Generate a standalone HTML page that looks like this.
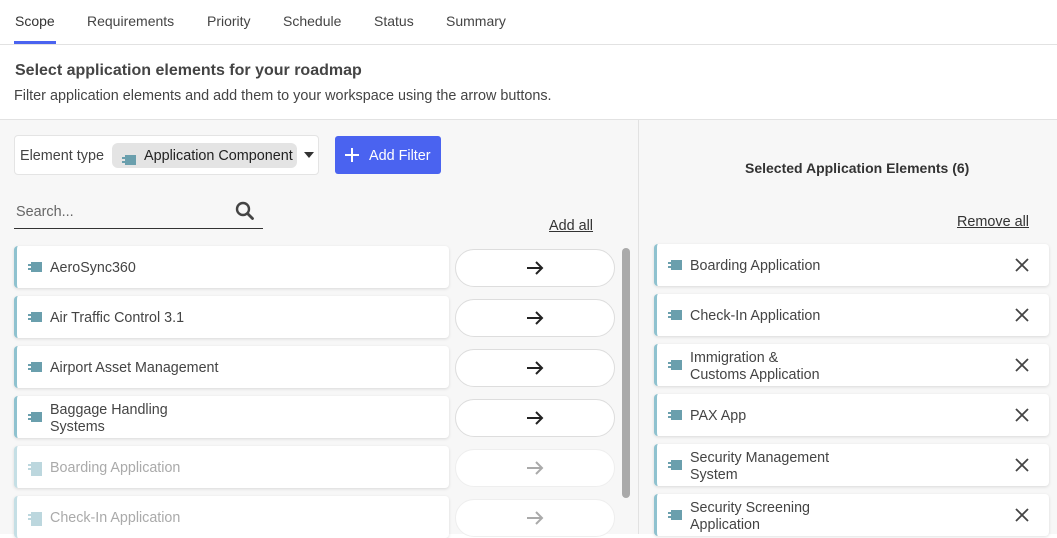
<!DOCTYPE html>
<html><head><style>
*{box-sizing:border-box;margin:0;padding:0}
body{width:1057px;height:534px;overflow:hidden;background:#fff;font-family:"Liberation Sans",sans-serif;color:#333;position:relative}
.abs{position:absolute}
.tab{position:absolute;top:13px;font-size:14px;color:#444}
.item{position:absolute;background:#fff;border-radius:4px;border-left:3px solid #8fc2cf;box-shadow:0 1px 3px rgba(0,0,0,.12);height:42px;display:flex;align-items:center;font-size:14.3px;line-height:17px;color:#444;padding-left:11px;padding-top:3px}
.item.dis{color:#aaa;border-left-color:#c5dfe5}
.ic{display:inline-block;width:14px;height:10px;margin-right:8px;position:relative;top:-2px;flex:none}
.ic:before{content:"";position:absolute;left:3px;top:0;width:11px;height:10px;background:#6a9fad}
.ic:after{content:"";position:absolute;left:0;top:2px;width:4px;height:2px;background:#6a9fad;box-shadow:0 4px 0 #6a9fad}
.dis .ic:before,.dis .ic:after{background:#bcd7de;box-shadow:0 4px 0 #bcd7de}
.btn{position:absolute;left:455px;width:160px;height:38px;border:1px solid #ddd;border-radius:19px;background:#fff;display:flex;align-items:center;justify-content:center}
.x{position:absolute;right:20px;top:14px}
</style></head><body>
<div class="tab" style="left:15px;color:#333">Scope</div>
<div class="tab" style="left:87px">Requirements</div>
<div class="tab" style="left:207px">Priority</div>
<div class="tab" style="left:283px">Schedule</div>
<div class="tab" style="left:374px">Status</div>
<div class="tab" style="left:446px">Summary</div>
<div class="abs" style="left:14px;top:41px;width:42px;height:3px;background:#4a63f0"></div>
<div class="abs" style="left:0;top:44px;width:1057px;height:1px;background:#e2e2e2"></div>
<div class="abs" style="left:15px;top:62px;font-size:16px;font-weight:bold;color:#444">Select application elements for your roadmap</div>
<div class="abs" style="left:14px;top:88px;font-size:14.4px;color:#444">Filter application elements and add them to your workspace using the arrow buttons.</div>
<div class="abs" style="left:0;top:119px;width:1057px;height:415px;background:#f7f7f7;border-top:1px solid #e2e2e2"></div>
<div class="abs" style="left:638px;top:120px;width:1px;height:414px;background:#e2e2e2"></div>

<div class="abs" style="left:14px;top:135px;width:305px;height:40px;background:#fff;border:1px solid #e4e4e4;border-radius:4px"></div>
<div class="abs" style="left:20px;top:148px;font-size:14.4px;color:#444">Element type</div>
<div class="abs" style="left:112px;top:143px;width:185px;height:25px;background:#e4e4e4;border-radius:6px"></div>
<div class="abs" style="left:122px;top:152px"><span class="ic" style="top:0"></span></div>
<div class="abs" style="left:144px;top:148px;font-size:14.4px;color:#222">Application Component</div>
<div class="abs" style="left:304px;top:152px;width:0;height:0;border-left:5px solid transparent;border-right:5px solid transparent;border-top:6px solid #333"></div>
<div class="abs" style="left:335px;top:136px;width:106px;height:38px;background:#4a63f0;border-radius:3px"></div>
<svg class="abs" style="left:344px;top:147px" width="16" height="16"><path d="M8 1v14M1 8h14" stroke="#fff" stroke-width="2"/></svg>
<div class="abs" style="left:369px;top:148px;font-size:14.4px;color:#fff">Add Filter</div>

<div class="abs" style="left:16px;top:204px;font-size:14.4px;color:#666">Search...</div>
<svg class="abs" style="left:235px;top:201px" width="20" height="20"><circle cx="8" cy="8" r="6" fill="none" stroke="#444" stroke-width="2.4"/><path d="M12.5 12.5l5 5" stroke="#444" stroke-width="2.8" stroke-linecap="round"/></svg>
<div class="abs" style="left:14px;top:228px;width:249px;height:1px;background:#333"></div>
<div class="abs" style="left:549px;top:218px;font-size:14.4px;color:#333;text-decoration:underline">Add all</div>

<div class="item" style="left:14px;top:246px;width:435px"><span class="ic"></span>AeroSync360</div>
<div class="item" style="left:14px;top:296px;width:435px"><span class="ic"></span>Air Traffic Control 3.1</div>
<div class="item" style="left:14px;top:346px;width:435px"><span class="ic"></span>Airport Asset Management</div>
<div class="item" style="left:14px;top:396px;width:435px"><span class="ic"></span>Baggage Handling<br>Systems</div>
<div class="item dis" style="left:14px;top:446px;width:435px"><span class="ic"></span>Boarding Application</div>
<div class="item dis" style="left:14px;top:496px;width:435px"><span class="ic"></span>Check-In Application</div>

<div class="btn" style="top:249px"><svg width="18" height="16"><path d="M1 8h15M10 2l6 6-6 6" fill="none" stroke="#222" stroke-width="2"/></svg></div>
<div class="btn" style="top:299px"><svg width="18" height="16"><path d="M1 8h15M10 2l6 6-6 6" fill="none" stroke="#222" stroke-width="2"/></svg></div>
<div class="btn" style="top:349px"><svg width="18" height="16"><path d="M1 8h15M10 2l6 6-6 6" fill="none" stroke="#222" stroke-width="2"/></svg></div>
<div class="btn" style="top:399px"><svg width="18" height="16"><path d="M1 8h15M10 2l6 6-6 6" fill="none" stroke="#222" stroke-width="2"/></svg></div>
<div class="btn" style="top:449px;border-color:#eee"><svg width="18" height="16"><path d="M1 8h15M10 2l6 6-6 6" fill="none" stroke="#aaa" stroke-width="2"/></svg></div>
<div class="btn" style="top:499px;border-color:#eee"><svg width="18" height="16"><path d="M1 8h15M10 2l6 6-6 6" fill="none" stroke="#aaa" stroke-width="2"/></svg></div>
<div class="abs" style="left:622px;top:248px;width:8px;height:250px;background:#aaa;border-radius:4px"></div>

<div class="abs" style="left:745px;top:160px;font-size:14px;font-weight:bold;color:#333">Selected Application Elements (6)</div>
<div class="abs" style="left:957px;top:214px;font-size:14.4px;color:#333;text-decoration:underline">Remove all</div>
<div class="item" style="left:654px;top:244px;width:395px"><span class="ic"></span>Boarding Application<svg class="x" width="14" height="14"><path d="M1 1l12 12M13 1L1 13" stroke="#444" stroke-width="1.8"/></svg></div>
<div class="item" style="left:654px;top:294px;width:395px"><span class="ic"></span>Check-In Application<svg class="x" width="14" height="14"><path d="M1 1l12 12M13 1L1 13" stroke="#444" stroke-width="1.8"/></svg></div>
<div class="item" style="left:654px;top:344px;width:395px"><span class="ic"></span>Immigration &amp;<br>Customs Application<svg class="x" width="14" height="14"><path d="M1 1l12 12M13 1L1 13" stroke="#444" stroke-width="1.8"/></svg></div>
<div class="item" style="left:654px;top:394px;width:395px"><span class="ic"></span>PAX App<svg class="x" width="14" height="14"><path d="M1 1l12 12M13 1L1 13" stroke="#444" stroke-width="1.8"/></svg></div>
<div class="item" style="left:654px;top:444px;width:395px"><span class="ic"></span>Security Management<br>System<svg class="x" width="14" height="14"><path d="M1 1l12 12M13 1L1 13" stroke="#444" stroke-width="1.8"/></svg></div>
<div class="item" style="left:654px;top:494px;width:395px"><span class="ic"></span>Security Screening<br>Application<svg class="x" width="14" height="14"><path d="M1 1l12 12M13 1L1 13" stroke="#444" stroke-width="1.8"/></svg></div>
</body></html>
